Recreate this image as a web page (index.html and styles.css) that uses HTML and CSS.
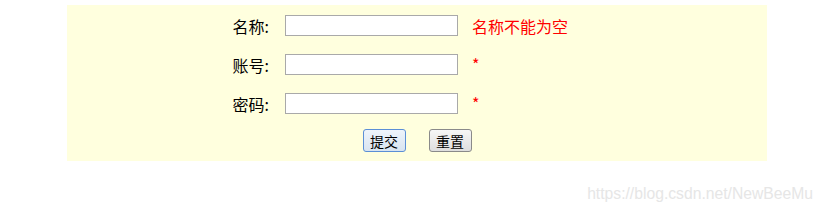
FILE: index.html
```html
<!DOCTYPE html>
<html lang="zh-CN">
<head>
    <meta charset="UTF-8">
    <title>注册</title>
    <link rel="stylesheet" href="styles.css">
</head>
<body>
    <form class="box">
        <div class="row">
            <label class="label">名称:</label>
            <input type="text" class="field">
            <span class="msg">名称不能为空</span>
        </div>
        <div class="row">
            <label class="label">账号:</label>
            <input type="text" class="field">
            <span class="msg star">*</span>
        </div>
        <div class="row">
            <label class="label">密码:</label>
            <input type="password" class="field">
            <span class="msg star">*</span>
        </div>
        <div class="buttons">
            <button type="button" class="btn active">提交</button>
            <button type="reset" class="btn">重置</button>
        </div>
    </form>
    <div class="watermark">https://blog.csdn.net/NewBeeMu</div>
</body>
</html>
```

FILE: styles.css
```css
body {
    margin: 0;
    padding: 0;
    font-family: "Noto Sans CJK SC", "Liberation Sans", sans-serif;
    background: #fff;
}
.box {
    width: 700px;
    height: 156px;
    margin: 5px 0 0 67px;
    padding-top: 10px;
    box-sizing: border-box;
    background-color: #ffffde;
}
.row {
    display: flex;
    align-items: center;
    height: 21px;
    margin-bottom: 18px;
}
.label {
    width: 202px;
    margin-right: 16px;
    text-align: right;
    font-size: 16px;
    color: #000;
}
.field {
    width: 173px;
    height: 21px;
    box-sizing: border-box;
    margin: 0;
    border: 1px solid #a9a9a9;
    background: #fff;
}
.msg {
    margin-left: 14px;
    font-size: 16px;
    color: #ff0000;
}
.star {
    position: relative;
    top: -1px;
}
.buttons {
    display: flex;
    justify-content: center;
    gap: 23px;
    margin-top: -3px;
}
.btn {
    width: 43px;
    height: 23px;
    padding: 0;
    font-family: "Noto Sans CJK SC", sans-serif;
    font-size: 14px;
    color: #000;
    border: 1px solid #8a8a8a;
    border-radius: 3px;
    background: linear-gradient(#f6f6f6, #dedede);
}
.btn.active {
    border-color: #5b8fd6;
    background: linear-gradient(#eef4fb, #d8e4f0);
}
.watermark {
    margin-top: 24px;
    padding-right: 10px;
    text-align: right;
    font-family: "Liberation Sans", sans-serif;
    font-size: 15.7px;
    color: #e6e6e6;
}
```
